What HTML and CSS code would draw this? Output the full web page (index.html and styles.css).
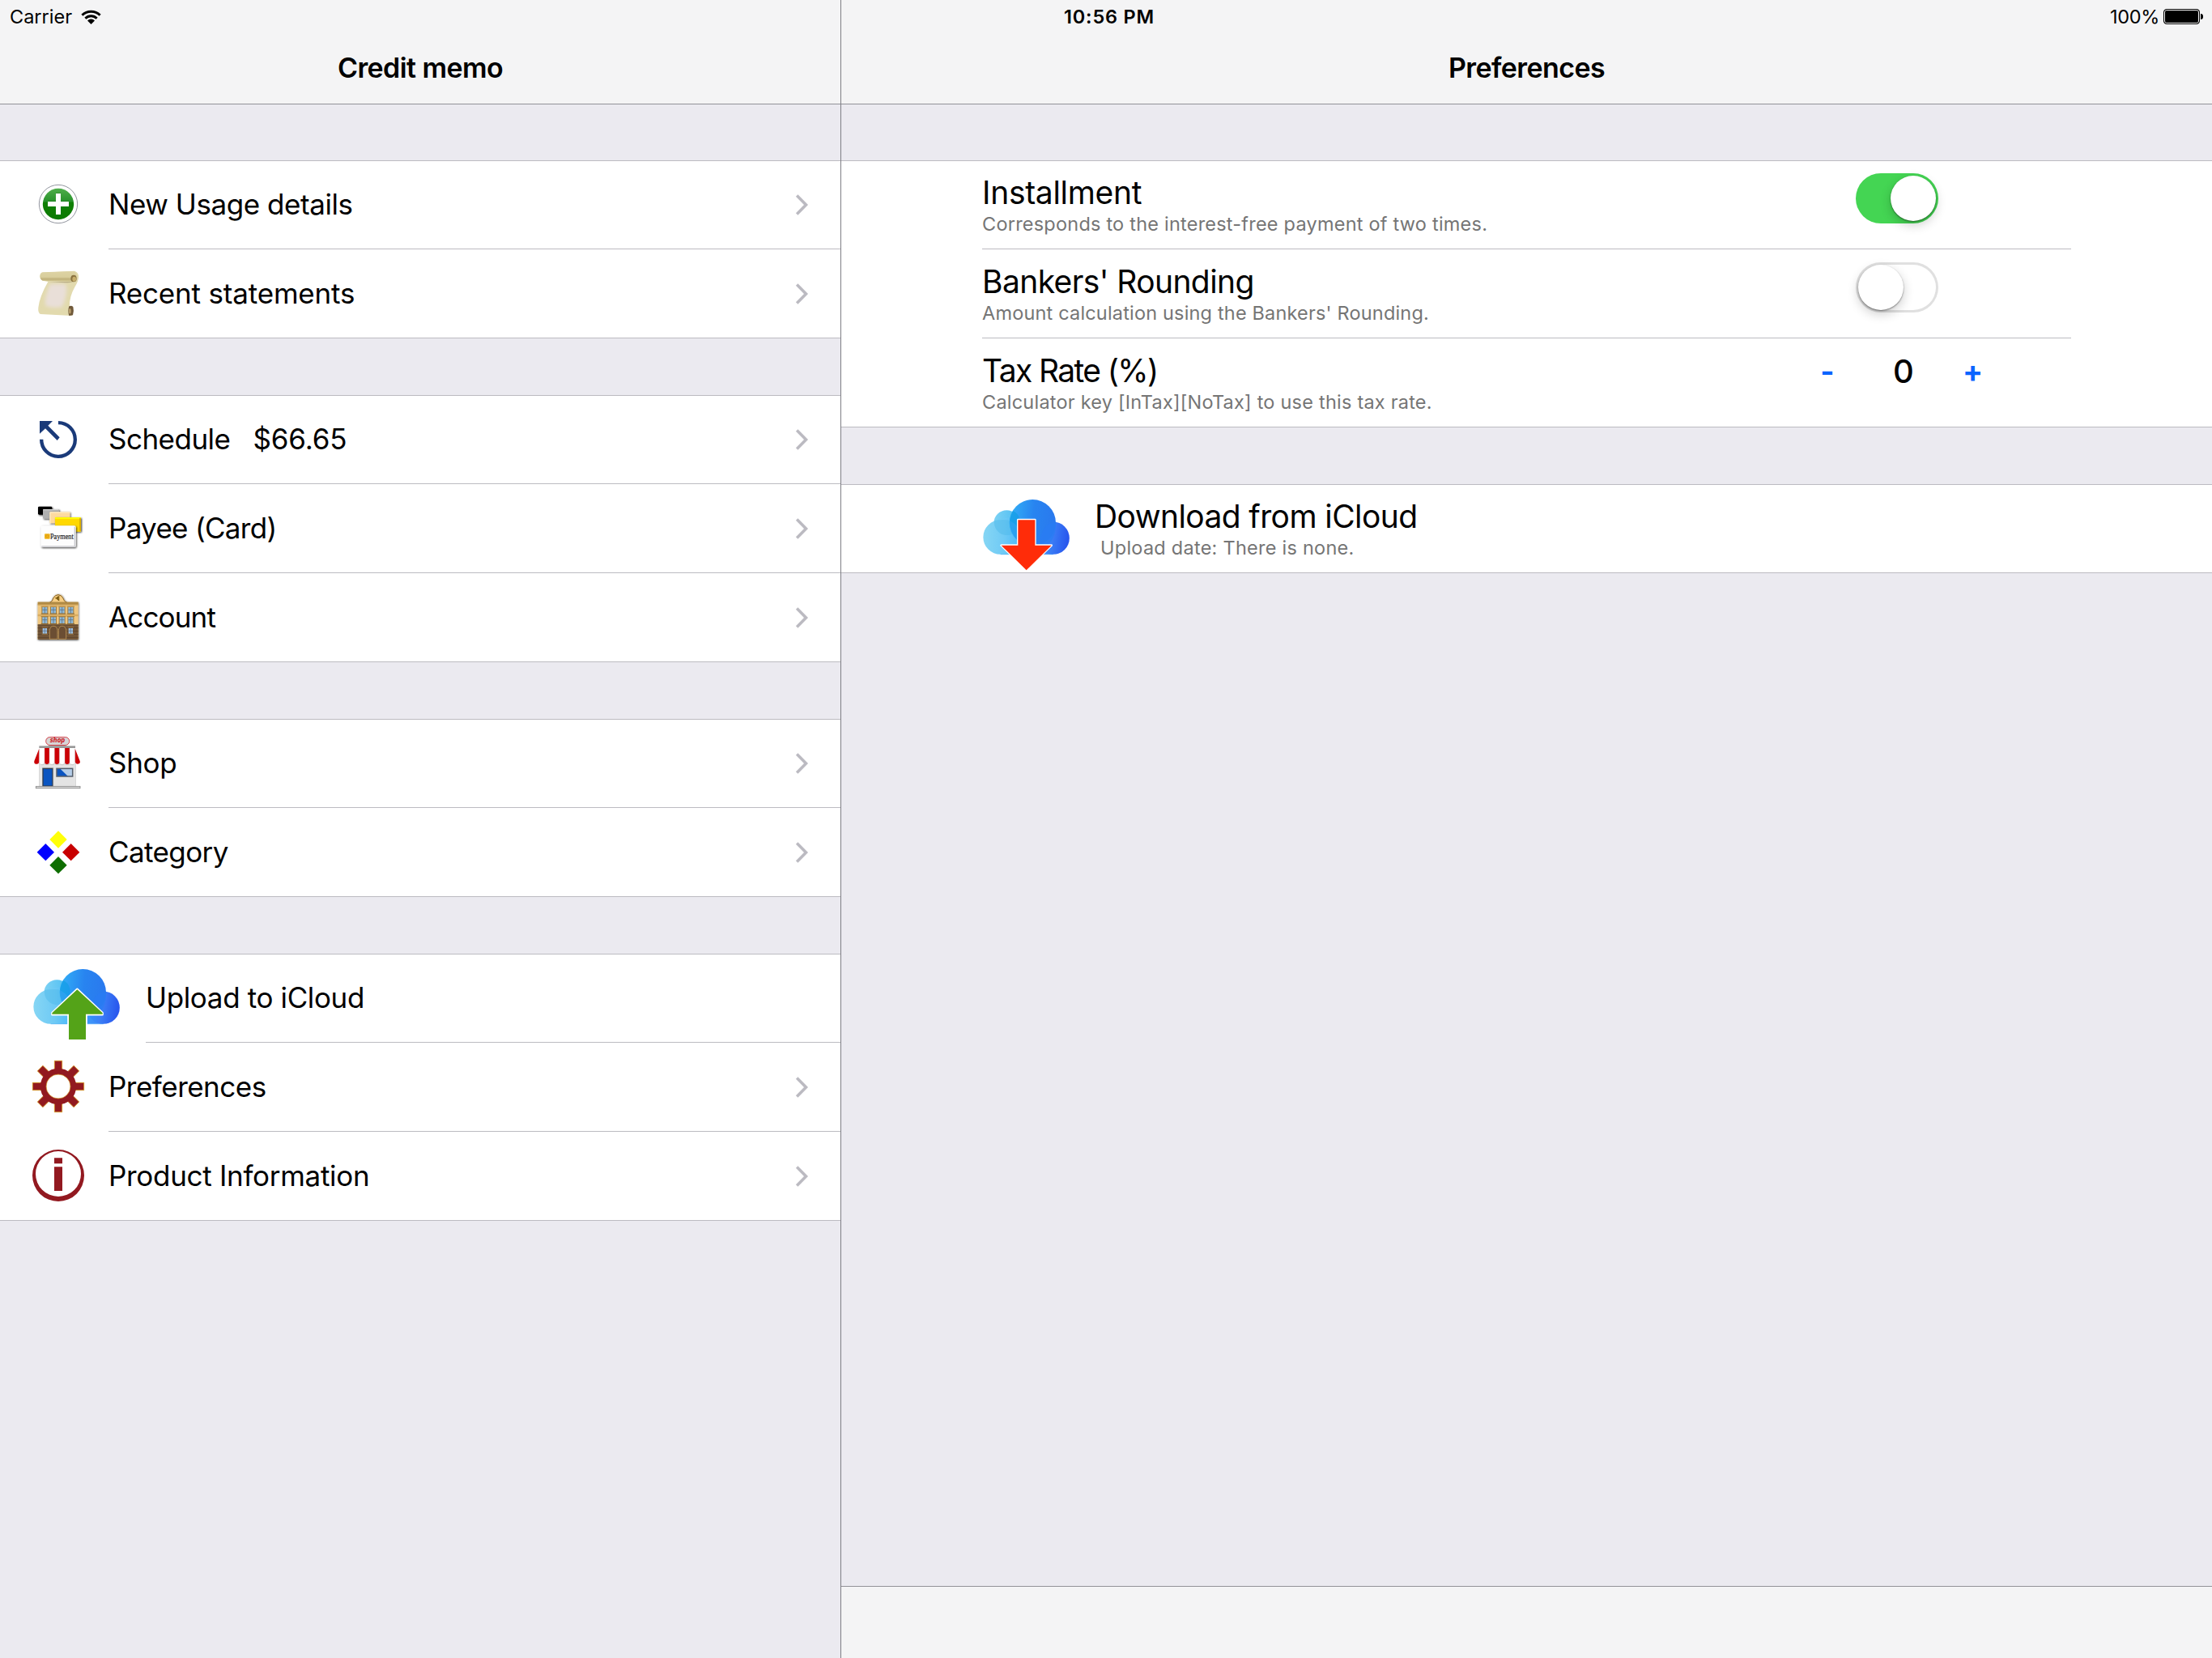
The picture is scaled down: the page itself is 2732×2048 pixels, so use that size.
FILE: index.html
```
<!DOCTYPE html>
<html lang="en">
<head>
<meta charset="utf-8">
<title>Credit memo</title>
<link rel="stylesheet" href="styles.css">
</head>
<body>
<svg class="defs" aria-hidden="true">
  <defs>
    <linearGradient id="c-left" x1="0" y1="0" x2="1" y2="0"><stop offset="0" stop-color="#86d6f4"/><stop offset=".45" stop-color="#6fcaf5"/><stop offset="1" stop-color="#35b0fb"/></linearGradient>
    <linearGradient id="c-small" x1="0" y1="0" x2="1" y2="0"><stop offset="0" stop-color="#7dd2f4"/><stop offset="1" stop-color="#4bbcf3"/></linearGradient>
    <linearGradient id="c-big" x1="0" y1=".5" x2="1" y2=".6"><stop offset="0" stop-color="#32aff6"/><stop offset=".5" stop-color="#2884f0"/><stop offset="1" stop-color="#2a78ee"/></linearGradient>
    <linearGradient id="c-right" x1="0" y1="0" x2="1" y2=".15"><stop offset="0" stop-color="#2b9bff"/><stop offset=".5" stop-color="#3c80f6"/><stop offset="1" stop-color="#2958ee"/></linearGradient>
    <linearGradient id="c-base" x1="0" y1="0" x2="1" y2="0"><stop offset="0" stop-color="#6fcaf5"/><stop offset=".35" stop-color="#3cb4ff"/><stop offset="1" stop-color="#3d80f6"/></linearGradient>
    <linearGradient id="green" x1="0" y1="0" x2="0" y2="1"><stop offset="0" stop-color="#4fae4b"/><stop offset=".43" stop-color="#27912a"/><stop offset=".44" stop-color="#108005"/><stop offset="1" stop-color="#0c7a02"/></linearGradient>
    <linearGradient id="roll" x1="0" y1="0" x2="0" y2="1"><stop offset="0" stop-color="#ddd3a4"/><stop offset=".55" stop-color="#d9ce9c"/><stop offset=".75" stop-color="#bfb07a"/><stop offset="1" stop-color="#d8cd9b"/></linearGradient>
    <filter id="soft" x="-20%" y="-20%" width="140%" height="140%"><feGaussianBlur stdDeviation="7"/></filter>
    <filter id="drop" x="-20%" y="-20%" width="150%" height="150%"><feDropShadow dx="3" dy="3" stdDeviation="2.5" flood-color="#000" flood-opacity=".75"/></filter>
    <filter id="halo" x="-20%" y="-20%" width="140%" height="140%"><feDropShadow dx="1" dy="2" stdDeviation="3.5" flood-color="#000" flood-opacity=".8"/></filter>
    <g id="win"><rect x="-14" y="-15" width="28" height="3" fill="#a8813f"/><rect x="-12" y="-12" width="24" height="26" fill="#a07a3c"/><rect x="-9" y="-11" width="18" height="23" fill="#8fb9d8"/><path d="M0-11V12M-9-1H9" stroke="#5c7184" stroke-width="2.5"/><rect x="-14" y="12" width="28" height="3" fill="#8f6c33"/></g>
  </defs>
  <symbol id="cloud" viewBox="120 24 420 330">
    <path d="M188 220H383V284.500H188Z" fill="url(#c-base)"/>
    <circle cx="383" cy="224" r="60.500" fill="url(#c-right)"/>
    <circle cx="211" cy="168" r="47.500" fill="url(#c-small)"/>
    <path d="M188 156.500A64 64 0 0 0 188 284.500H262A74 74 0 0 0 188 156.500Z" fill="url(#c-left)"/>
    <path d="M165 160A47.500 47.500 0 0 0 256 184A74 74 0 0 0 188 156.500Q175 156 165 160Z" fill="#4fb9e9" opacity=".5"/>
    <circle cx="307" cy="167" r="86" fill="url(#c-big)"/>
    <path d="M234 122A47.500 47.500 0 0 1 255 186Q240 169 222 160Q224 140 234 122Z" fill="#139de6" opacity=".7"/>
    <path d="M222 160Q262 180 262 240Q222 210 222 160Z" fill="#2ba0ee" opacity=".8"/>
    <path d="M330 250Q340 168 392 164Q396 220 362 250Z" fill="#2a7cf3" opacity=".75"/>
    <path d="M188 284.500H383" stroke="#3aa0f5" stroke-width="2" opacity=".6"/>
  </symbol>
</svg>

<div class="status">
  <div class="status-left"><span>Carrier</span>
    <svg class="wifi" viewBox="0 0 25 18"><path d="M1.400 6.700A15.900 15.900 0 0 1 23.600 6.700M5.400 10.800A10 10 0 0 1 19.600 10.800" fill="none" stroke="#000" stroke-width="3"/><path d="M12.500 17.900L8 13.500A6.300 6.300 0 0 1 17 13.500Z"/></svg>
  </div>
  <div class="status-time">10:56 PM</div>
  <div class="status-right"><span>100%</span><span class="battery"></span></div>
</div>

<div class="split">
  <nav class="master">
    <header class="bar"><h1>Credit memo</h1></header>

    <ul class="group">
      <li class="row">
        <svg class="icon" viewBox="0 24 402 330"><circle cx="216" cy="186" r="71" fill="#fff" stroke="#7d818b" stroke-width="2.500"/><circle cx="216" cy="186" r="57.500" fill="url(#green)"/><path d="M216 147V225M177 186H255" stroke="#0a5c05" stroke-width="18" opacity=".35" transform="translate(0 -2)"/><path d="M216 147V225M177 186H255" stroke="#fff" stroke-width="18"/></svg>
        <div class="cell"><span class="label ls-45">New Usage details</span><svg class="chevron" viewBox="0 0 17 28"><path d="M2.200 2.500L13.500 14L2.200 25.500"/></svg></div>
      </li>
      <li class="row">
        <svg class="icon" viewBox="0 354 402 330"><path d="M158 440L276 434Q293 440 291 458Q290 472 278 492Q256 530 258 566L270 568Q273 590 266 600L150 594Q140 590 142 570Q146 530 178 474L158 470Q146 462 149 448Q152 441 158 440Z" fill="#e2daae"/><path d="M186 482H243Q250 500 243 530Q236 560 228 568Q190 574 168 562Q164 530 186 482Z" fill="#e9dfd8" filter="url(#soft)"/><path d="M158 439L272 435Q284 437 284 452Q284 468 272 474L158 470Q148 466 148 454Q149 441 158 439Z" fill="url(#roll)"/><path d="M178 474H272Q262 478 240 478Z" fill="#a99c76" opacity=".7"/><ellipse cx="273" cy="462" rx="11" ry="13" fill="#8a7340"/><ellipse cx="275" cy="464" rx="7" ry="9" fill="#c6ad6b"/><path d="M256 565Q264 560 271 567Q275 584 270 598L256 600Q250 582 256 565Z" fill="#70593a"/><ellipse cx="259" cy="583" rx="4.500" ry="10" fill="#b49a68"/></svg>
        <div class="cell"><span class="label ls-20">Recent statements</span><svg class="chevron" viewBox="0 0 17 28"><path d="M2.200 2.500L13.500 14L2.200 25.500"/></svg></div>
      </li>
    </ul>

    <ul class="group">
      <li class="row">
        <svg class="icon" viewBox="0 24 402 330"><path d="M216 126.500A62.500 62.500 0 1 1 153.500 188" fill="none" stroke="#1a3a79" stroke-width="13"/><path d="M147 120H195L178 137L221 181L212 192L168 148L147 167Z" fill="#1a3a79"/></svg>
        <div class="cell"><span class="label ls-50">Schedule</span><span class="label amount ls-20">$66.65</span><svg class="chevron" viewBox="0 0 17 28"><path d="M2.200 2.500L13.500 14L2.200 25.500"/></svg></div>
      </li>
      <li class="row">
        <svg class="icon" viewBox="0 354 402 330"><g filter="url(#drop)"><rect x="141" y="437" width="52" height="30" rx="4" fill="#000"/></g><g filter="url(#drop)"><rect x="159" y="447" width="60" height="35" rx="3" fill="#b0b0b0"/><path d="M160 449H217" stroke="#ddd" stroke-width="3"/></g><g filter="url(#drop)"><rect x="184" y="457" width="75" height="42" rx="3" fill="#fddaa0"/><path d="M186 499V459H258" stroke="#fff0cf" stroke-width="3" fill="none"/></g><g filter="url(#drop)"><rect x="204" y="477" width="96" height="53" rx="3" fill="#ffd800"/><path d="M204 480H300" stroke="#fffb00" stroke-width="6"/><path d="M297 480V528" stroke="#d8a900" stroke-width="5"/></g><g filter="url(#drop)"><rect x="151" y="508" width="130" height="80" rx="6" fill="#fdfdfd"/><path d="M154 585H277V512" stroke="#c9c9ce" stroke-width="4" fill="none"/></g><rect x="165" y="538" width="20" height="19" rx="3" fill="#f0b51c"/><circle cx="175" cy="547" r="5" fill="none" stroke="#d58d08" stroke-width="2"/><text x="186" y="557" class="pay-text" textLength="86" lengthAdjust="spacingAndGlyphs">Payment</text></svg>
        <div class="cell"><span class="label ls-70">Payee (Card)</span><svg class="chevron" viewBox="0 0 17 28"><path d="M2.200 2.500L13.500 14L2.200 25.500"/></svg></div>
      </li>
      <li class="row">
        <svg class="icon" viewBox="0 684 402 330"><path d="M140 791H182Q195 787 196 776Q204 762 216 762Q230 763 235 776Q238 787 250 791H290V930H140Z" fill="#efc780" filter="url(#halo)"/><path d="M184 793Q196 788 197 777Q204 764 216 764Q228 765 234 777Q236 788 248 793Z" fill="#f8cf84" stroke="#80602e" stroke-width="3"/><path d="M203 776L220 767V787Z" fill="#96701a"/><path d="M216 770Q208 778 218 786" fill="none" stroke="#5d440c" stroke-width="3"/><rect x="140" y="791" width="150" height="11" fill="#b08a45"/><path d="M140 801H290M140 838H290M140 842H290" stroke="#d3a65b" stroke-width="3"/><rect x="140" y="874" width="150" height="56" fill="#735638"/><path d="M140 876H290M140 887H290M140 899H290M140 911H290M140 922H290" stroke="#57402a" stroke-width="2.500"/><use href="#win" x="166" y="821"/><use href="#win" x="198" y="821"/><use href="#win" x="230" y="821"/><use href="#win" x="262" y="821"/><use href="#win" x="166" y="858"/><use href="#win" x="198" y="858"/><use href="#win" x="230" y="858"/><use href="#win" x="262" y="858"/><path d="M184 928V895Q186 880 198 880Q211 880 213 895V928ZM217 928V895Q219 880 230 880Q243 880 245 895V928Z" fill="#6b4e33" stroke="#b28c52" stroke-width="3"/><g fill="#9cc0e2"><rect x="158" y="888" width="16" height="20"/><rect x="254" y="888" width="16" height="20"/></g><path d="M166 888V908M158 898H174M262 888V908M254 898H270" stroke="#56677c" stroke-width="2"/><path d="M155 884H177M251 884H273M155 910H177M251 910H273" stroke="#a07b45" stroke-width="2.500"/></svg>
        <div class="cell"><span class="label ls-85">Account</span><svg class="chevron" viewBox="0 0 17 28"><path d="M2.200 2.500L13.500 14L2.200 25.500"/></svg></div>
      </li>
    </ul>

    <ul class="group">
      <li class="row">
        <svg class="icon" viewBox="0 24 402 330"><rect x="180" y="118" width="64" height="8" fill="#bbb"/><rect x="170" y="91.500" width="87" height="30" rx="15" fill="#d6d6d6" stroke="#d1222b" stroke-width="2.500"/><text x="213" y="112" text-anchor="middle" class="shop-text" textLength="55" lengthAdjust="spacingAndGlyphs">shop</text><rect x="145" y="180" width="136" height="94" fill="#e4e4e4" stroke="#cfcfcf" stroke-width="2"/><path d="M147 190Q156 200 165 192Q174 200 184 192Q193 200 203 192Q212 200 221 192Q230 200 240 192Q249 200 259 192Q270 200 278 190" fill="#ccc"/><path d="M145 132H278L296 180Q298 192 288 191Q276 191 278 180Q279 192 268 192Q258 192 258 184Q256 192 249 192Q240 192 239 184Q238 192 230 192Q221 192 220 184Q218 192 211 192Q203 192 202 184Q200 192 193 192Q184 192 183 184Q182 192 174 192Q165 192 165 184Q164 192 155 192Q146 192 145 180Q146 191 136 191Q125 192 127 180Z" fill="#fff"/><path d="M165 132H183V184Q182 192 174 192Q165 192 165 184ZM202 132H220V184Q219 192 211 192Q202 192 202 184ZM240 132H258V184Q257 192 249 192Q240 192 240 184ZM145 134V182Q144 192 135 191Q125 192 127 180ZM278 134V182Q279 190 288 191Q299 190 296 180Z" fill="#cb0006"/><path d="M145 134V188M165 132V186M183 132V186M202 132V186M220 132V186M240 132V186M258 132V186M278 134V188" stroke="#c9b4b4" stroke-width="1.500" opacity=".8"/><rect x="145" y="124" width="134" height="8" fill="#999" /><rect x="159" y="208" width="36" height="65" fill="#0a54c1" stroke="#2e3a4d" stroke-width="4"/><path d="M157 205H197V273" fill="none" stroke="#999" stroke-width="2"/><rect x="210" y="208" width="59" height="29" fill="#0a54c1"/><path d="M222 208H269V237H252Z" fill="#b5cde8"/><rect x="210" y="208" width="59" height="29" fill="none" stroke="#555e6b" stroke-width="4.500"/><rect x="133" y="274" width="164" height="7" fill="#d5d5d5" stroke="#888" stroke-width="2.500"/></svg>
        <div class="cell"><span class="label ls-30">Shop</span><svg class="chevron" viewBox="0 0 17 28"><path d="M2.200 2.500L13.500 14L2.200 25.500"/></svg></div>
      </li>
      <li class="row">
        <svg class="icon" viewBox="0 354 402 330"><path d="M216 439L248 471L216 503L184 471Z" fill="#ffff0a"/><path d="M169 486L201 518L169 550L137 518Z" fill="#00f"/><path d="M263 486L295 518L263 550L231 518Z" fill="#c80000"/><path d="M216 534L248 566L216 598L184 566Z" fill="#0e6e02"/></svg>
        <div class="cell"><span class="label ls-60">Category</span><svg class="chevron" viewBox="0 0 17 28"><path d="M2.200 2.500L13.500 14L2.200 25.500"/></svg></div>
      </li>
    </ul>

    <ul class="group">
      <li class="row">
        <svg class="icon icon-upload" viewBox="0 24 540 330"><use href="#cloud" x="120" y="24" width="420" height="330"/><path d="M286 155L380 243V250H320V342H253V250H193V243Z" fill="#fff" stroke="#fff" stroke-width="7" stroke-linejoin="round"/><path d="M286 157L380 244V248H318V342H255V248H193V244Z" fill="#54a318"/></svg>
        <div class="cell"><span class="label ls-35">Upload to iCloud</span></div>
      </li>
      <li class="row">
        <svg class="icon" viewBox="0 354 402 330"><g fill="#921920" stroke="#d79a1e" stroke-width="2.500"><path id="tooth" d="M202 470V421H230V470"/><use href="#tooth" transform="rotate(45 216 516)"/><use href="#tooth" transform="rotate(90 216 516)"/><use href="#tooth" transform="rotate(135 216 516)"/><use href="#tooth" transform="rotate(180 216 516)"/><use href="#tooth" transform="rotate(225 216 516)"/><use href="#tooth" transform="rotate(270 216 516)"/><use href="#tooth" transform="rotate(315 216 516)"/></g><circle cx="216" cy="516" r="45" fill="#fff"/><circle cx="216" cy="516" r="55.500" fill="none" stroke="#921920" stroke-width="22"/><circle cx="216" cy="516" r="45" fill="none" stroke="#d79a1e" stroke-width="2"/></svg>
        <div class="cell"><span class="label ls-50">Preferences</span><svg class="chevron" viewBox="0 0 17 28"><path d="M2.200 2.500L13.500 14L2.200 25.500"/></svg></div>
      </li>
      <li class="row">
        <svg class="icon" viewBox="0 684 402 330"><path fill="#921920" fill-rule="evenodd" d="M216 750A96 96 0 1 1 216 942A96 96 0 1 1 216 750ZM216 756A84 84 0 1 0 216 924A84 84 0 1 0 216 756ZM201 781H231V802H201ZM201 814H231V903H201Z"/></svg>
        <div class="cell"><span class="label ls-30">Product Information</span><svg class="chevron" viewBox="0 0 17 28"><path d="M2.200 2.500L13.500 14L2.200 25.500"/></svg></div>
      </li>
    </ul>
  </nav>

  <main class="detail">
    <header class="bar"><h1>Preferences</h1></header>
    <div class="content">
      <ul class="group">
        <li class="setting">
          <div class="cell">
            <div class="copy"><div class="title ls-30">Installment</div><div class="sub">Corresponds to the interest-free payment of two times.</div></div>
            <span class="switch on"><span class="knob"></span></span>
          </div>
        </li>
        <li class="setting">
          <div class="cell">
            <div class="copy"><div class="title ls-60">Bankers' Rounding</div><div class="sub sub-close">Amount calculation using the Bankers' Rounding.</div></div>
            <span class="switch"><span class="knob"></span></span>
          </div>
        </li>
        <li class="setting">
          <div class="cell">
            <div class="copy"><div class="title ls-160">Tax Rate (%)</div><div class="sub">Calculator key [InTax][NoTax] to use this tax rate.</div></div>
            <div class="stepper"><span class="step">-</span><span class="value">0</span><span class="step">+</span></div>
          </div>
        </li>
      </ul>
      <ul class="group">
        <li class="setting">
          <svg class="icon-download" viewBox="120 24 417 330"><use href="#cloud" x="120" y="24" width="420" height="330"/><path d="M253 156H316V251H377L284 342L191 251H253Z" fill="#fff" stroke="#fff" stroke-width="8" stroke-linejoin="round"/><path d="M253 157H316V251H377L284 343L191 251H253Z" fill="#ff2c09"/></svg>
          <div class="cell">
            <div class="copy"><div class="title ls-60">Download from iCloud</div><div class="sub sub-indent">Upload date: There is none.</div></div>
          </div>
        </li>
      </ul>
    </div>
    <footer class="toolbar"></footer>
  </main>
</div>
</body>
</html>
```
FILE: styles.css
```
* { box-sizing: border-box; }
body {
  margin: 0;
  height: 2048px;
  overflow: hidden;
  position: relative;
  font-family: Inter, "Liberation Sans", sans-serif;
  color: #000;
  background: #ebeaf0;
}
ul { list-style: none; margin: 0; padding: 0; }
svg { display: block; flex: none; }
.defs { position: absolute; width: 0; height: 0; }

/* status bar lies over both navigation bars */
.status {
  position: absolute;
  inset: 0 0 auto 0;
  height: 41px;
  padding: 0 11px 0 12px;
  display: grid;
  grid-template-columns: 1fr auto 1fr;
  align-items: center;
  font-size: 23.5px;
  line-height: 41px;
}
.status-left, .status-right { display: flex; align-items: center; }
.status-left { gap: 11px; }
.status-right { justify-content: flex-end; gap: 5px; padding-right: 4px; letter-spacing: -.3px; }
.status-time { font-weight: 600; letter-spacing: .8px; padding-left: 7px; }
.wifi { width: 25px; height: 18px; }
.battery {
  position: relative;
  width: 45px;
  height: 19px;
  border: 1px solid #000;
  border-radius: 4px;
  background: #000;
  box-shadow: inset 0 0 0 1px #f4f4f5;
}
.battery::after {
  content: "";
  position: absolute;
  right: -5px;
  top: 5px;
  width: 3px;
  height: 7px;
  background: #000;
  border-radius: 0 3px 3px 0;
}

.split { display: grid; grid-template-columns: 1039px 1fr; height: 2048px; }
.master { border-right: 1px solid #7e7e85; }
.detail { display: flex; flex-direction: column; }
.content { flex: 1; }

.bar {
  height: 129px;
  padding-top: 40px;
  display: flex;
  align-items: center;
  justify-content: center;
  background: #f4f4f5;
  border-bottom: 1px solid #929298;
}
h1 { margin: 0; font-size: 34px; line-height: 44px; font-weight: 600; letter-spacing: -.6px; }
.toolbar { height: 89px; background: #f4f4f5; border-top: 1px solid #929298; }

.group {
  margin-top: 70px;
  background: #fff;
  box-shadow: inset 0 1px #bcbbc1, inset 0 -1px #bcbbc1;
}
.bar + .group, .content > .group:first-child { margin-top: 69px; }
.row, .setting { display: flex; height: 110px; }
.cell { flex: 1; display: flex; border-bottom: 1px solid #bcbbc1; }
.group > :last-child .cell { border-bottom-color: transparent; }

.row .cell { align-items: center; padding-right: 39px; }
.icon { width: 134px; height: 110px; }
.icon-upload { width: 180px; }
.label { font-size: 35px; line-height: 44px; padding-bottom: 2px; white-space: pre; }
.amount { margin-left: 28px; }
.chevron { width: 17px; height: 28px; margin-left: auto; fill: none; stroke: #bbbac1; stroke-width: 3.6; }

.setting { padding: 0 174px; }
.setting .cell { align-items: flex-start; justify-content: space-between; }
.copy { padding-top: 17px; }
.title { font-size: 39px; line-height: 46px; white-space: pre; }
.sub { font-size: 23.5px; line-height: 32px; color: #757575; letter-spacing: .22px; white-space: pre; }
.sub-close { letter-spacing: .175px; }
.sub-indent { padding-left: 7px; letter-spacing: .25px; }
.icon-download { width: 139px; height: 110px; }

.switch {
  width: 102px;
  height: 62px;
  margin: 16px 164px 0 0;
  padding: 3px;
  display: flex;
  border-radius: 31px;
  box-shadow: inset 0 0 0 3px #e0e0e0;
}
.switch.on { justify-content: flex-end; background: #44d553; box-shadow: none; }
.knob {
  width: 56px;
  height: 56px;
  border-radius: 50%;
  background: #fff;
  box-shadow: 0 5px 14px rgba(0, 0, 0, .2), 0 1px 2px rgba(0, 0, 0, .45);
}

.stepper {
  display: grid;
  grid-template-columns: 80px 108px 63px;
  margin: 17px 90px 0 0;
  line-height: 48px;
  text-align: center;
}
.value { font-size: 40px; font-weight: 500; }
.step { font-size: 37px; font-weight: 700; color: #0b64ff; }

.pay-text { font: 29px "Liberation Serif", serif; fill: #222; stroke: #222; stroke-width: .6; }
.shop-text { font: italic bold 24px "DejaVu Sans", sans-serif; fill: #cc1420; }

.ls-20 { letter-spacing: -.18px; }
.ls-30 { letter-spacing: -.3px; }
.ls-35 { letter-spacing: -.36px; }
.ls-45 { letter-spacing: -.44px; }
.ls-50 { letter-spacing: -.51px; }
.ls-60 { letter-spacing: -.6px; }
.ls-70 { letter-spacing: -.7px; }
.ls-85 { letter-spacing: -.85px; }
.ls-160 { letter-spacing: -1.63px; }
```
